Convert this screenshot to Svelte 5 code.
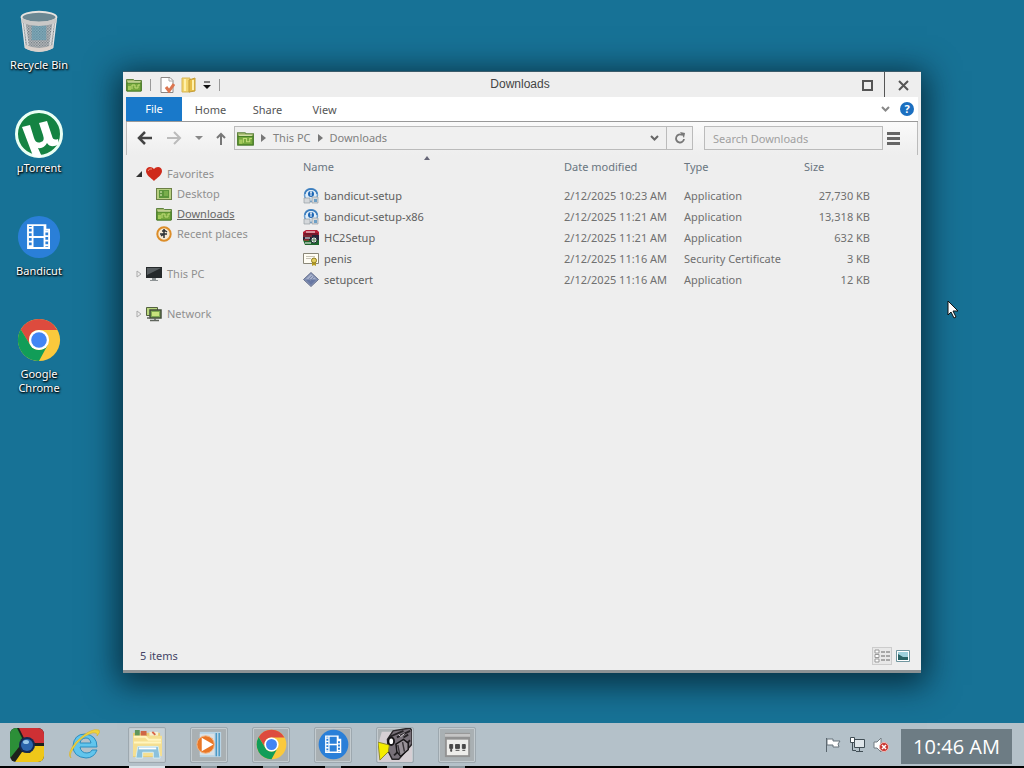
<script lang="ts">
  type FileRow = { icon: string; name: string; date: string; type: string; size: string };

  const shortcuts = [
    { icon: 'bin', label: 'Recycle Bin' },
    { icon: 'utorrent', label: 'µTorrent' },
    { icon: 'bandicut', label: 'Bandicut' },
    { icon: 'chrome', label: 'Google Chrome' },
  ];

  const files: FileRow[] = [
    { icon: 'setup', name: 'bandicut-setup', date: '2/12/2025 10:23 AM', type: 'Application', size: '27,730 KB' },
    { icon: 'setup', name: 'bandicut-setup-x86', date: '2/12/2025 11:21 AM', type: 'Application', size: '13,318 KB' },
    { icon: 'archive', name: 'HC2Setup', date: '2/12/2025 11:21 AM', type: 'Application', size: '632 KB' },
    { icon: 'cert', name: 'penis', date: '2/12/2025 11:16 AM', type: 'Security Certificate', size: '3 KB' },
    { icon: 'diamond', name: 'setupcert', date: '2/12/2025 11:16 AM', type: 'Application', size: '12 KB' },
  ];

  const favorites = [
    { icon: 'desktop', label: 'Desktop' },
    { icon: 'folder', label: 'Downloads' },
    { icon: 'recent', label: 'Recent places' },
  ];

  const tasks = [
    { icon: 'explorer', label: 'File Explorer', active: true },
    { icon: 'player', label: 'Media Player', active: false },
    { icon: 'chrome', label: 'Google Chrome', active: false },
    { icon: 'bandicut', label: 'Bandicut', active: false },
    { icon: 'camera', label: 'Camera', active: false },
    { icon: 'panel', label: 'Control panel', active: false },
  ];

  let current = $state('Downloads');
  let search = $state('');
</script>

{#snippet icon(name: string, size: number)}
  {#if name === 'bin'}
    <svg width={size} height={size} viewBox="0 0 48 48" aria-hidden="true">
      <defs>
        <pattern id="mesh" width="3" height="3" patternUnits="userSpaceOnUse">
          <rect width="3" height="3" fill="#c3c5c7" /><rect width="1.500" height="1.500" fill="#6a757c" /><rect x="1.500" y="1.500" width="1.500" height="1.500" fill="#7f888e" />
        </pattern>
      </defs>
      <path d="M5 9L9 42Q24 50 39 42L43 9Z" fill="url(#mesh)" stroke="#e4e4e4" stroke-width="1.500" />
      <path d="M16 18h16v16H16z" fill="#4d9ab5" opacity=".5" />
      <path d="M8 13L12 40M40 13L36 40" stroke="#eee" stroke-width="2" opacity=".7" />
      <path d="M9 39Q24 46 39 39V43Q24 51 9 43Z" fill="#d9d0ca" />
      <ellipse cx="24" cy="9" rx="19" ry="6" fill="#6c8792" stroke="#e7e3e0" stroke-width="2" />
      <path d="M5 10v5q19 7 38 0v-5q-19 8-38 0z" fill="#c9c8c7" />
    </svg>
  {:else if name === 'utorrent'}
    <svg width={size} height={size} viewBox="0 0 48 48" aria-hidden="true">
      <circle cx="24" cy="24" r="22.500" fill="#148342" stroke="#eafff4" stroke-width="3" />
      <path d="M7 17l8-2 4 13q2 6 7 4 4-1 2-7l-4-12 8-2 5 15q1 5 6 3l1 5q-8 5-12-1-3 6-9 5l4 9q-5 1-9-1z" fill="#fff" />
    </svg>
  {:else if name === 'bandicut'}
    <svg width={size} height={size} viewBox="0 0 48 48" aria-hidden="true">
      <circle cx="24" cy="24" r="23" fill="#2a7fd8" />
      <path d="M12 11h19v5h4v20H12zM17 11v25M30 11v25M17 24h13" fill="none" stroke="#fff" stroke-width="2" />
      <path d="M14.500 13v23M32.500 17v19" stroke="#fff" stroke-width="4" stroke-dasharray="2 3" />
    </svg>
  {:else if name === 'chrome'}
    <svg width={size} height={size} viewBox="0 0 48 48" aria-hidden="true">
      <circle cx="24" cy="24" r="23" fill="#fac93c" />
      <path d="M24 1A23 23 0 0 1 44 13H24A11 11 0 0 0 14.500 29.500L4.100 12.500A23 23 0 0 1 24 1z" fill="#dd4b3e" />
      <path d="M4.100 12.500L14.500 29.500A11 11 0 0 0 33.500 29.500L24 47A23 23 0 0 1 4.100 12.500z" fill="#119d58" />
      <circle cx="24" cy="24" r="11" fill="#fff" /><circle cx="24" cy="24" r="8.500" fill="#4285f4" />
    </svg>
  {:else if name === 'folder'}
    <svg width={size} height={size} viewBox="0 0 16 16" aria-hidden="true">
      <path d="M.500 4V2.500h7l1 1h7V14H.500z" fill="#a4b96c" stroke="#5f8440" />
      <path d="M1 6h14v8H1z" fill="#77a93e" stroke="#497f28" />
      <path d="M2 9h3v4H2z" fill="#a5cb5c" /><path d="M6 12V8h3v3h3V8h2" fill="none" stroke="#c2dc79" />
      <path d="M2 5h12" stroke="#dfe9b6" />
    </svg>
  {:else if name === 'desktop'}
    <svg width={size} height={size} viewBox="0 0 16 16" aria-hidden="true">
      <path d="M0 2h16v12H0z" fill="#6b7f45" /><path d="M1 3h14v10H1z" fill="#b7cf82" />
      <path d="M3 4h10v8H3z" fill="#5b943b" /><path d="M4 6h2M4 9h2" stroke="#edf5c9" /><path d="M8 5h4v5H8z" fill="#79ad4b" />
    </svg>
  {:else if name === 'recent'}
    <svg width={size} height={size} viewBox="0 0 16 16" aria-hidden="true">
      <circle cx="8" cy="8" r="6.700" fill="#f7ead4" stroke="#dc8d29" stroke-width="2" />
      <path d="M8 3v9M4 8h7M8 4l3 2M5 10l3-2M6 5h3" stroke="#2e3337" stroke-width="1.500" fill="none" />
    </svg>
  {:else if name === 'heart'}
    <svg width={size} height={size} viewBox="0 0 16 16" aria-hidden="true">
      <path d="M8 15C5 12 0 9 0 5 0 0 6 0 8 3c2-3 8-3 8 2 0 4-5 7-8 10z" fill="#cf2a1b" /><path d="M2 5q1-3 4-2" stroke="#f0907a" fill="none" />
    </svg>
  {:else if name === 'monitor'}
    <svg width={size} height={size} viewBox="0 0 16 16" aria-hidden="true">
      <path d="M0 1h16v11H0z" fill="#25292b" /><path d="M1 2h14L1 9z" fill="#575d60" /><path d="M6 12h4v2h2v1H4v-1h2z" fill="#8e9395" />
    </svg>
  {:else if name === 'network'}
    <svg width={size} height={size} viewBox="0 0 16 16" aria-hidden="true">
      <path d="M.500 1.500h11v8H.500z" fill="#b9d67c" stroke="#53613f" /><path d="M4 4h11v8H4z" fill="#80a952" stroke="#434e3b" stroke-width="1.500" />
      <path d="M6 6h7v4H6z" fill="#c9e27d" /><path d="M1 12h3M4 14.500h9M9 12v2" stroke="#60665e" stroke-width="1.500" />
    </svg>
  {:else if name === 'setup'}
    <svg width={size} height={size} viewBox="0 0 16 16" aria-hidden="true">
      <circle cx="8" cy="7" r="6.500" fill="#e0edf8" stroke="#6b9fd0" stroke-width="1.500" />
      <path d="M2 6q0-4 6-5 6 1 6 5" stroke="#3c7dbd" stroke-width="1.500" fill="none" />
      <circle cx="8" cy="6" r="3" fill="#1d67b5" /><path d="M8 4v4M7 4h2" stroke="#fff" />
      <path d="M1 10h6v5H1zM9 9h6v6H9z" fill="#d5d8db" stroke="#969da3" stroke-width=".7" /><path d="M11 11h3v3h-3z" fill="#6c9fc6" />
    </svg>
  {:else if name === 'archive'}
    <svg width={size} height={size} viewBox="0 0 16 16" aria-hidden="true">
      <path d="M0 2L3 0h11l2 2v3H0z" fill="#b42037" /><path d="M0 5h16v5H0z" fill="#252438" /><path d="M0 10h16v5H2z" fill="#1e652d" />
      <path d="M3 2h9M2 8h5M2 13h6" stroke="#fff" /><path d="M1 4h14" stroke="#3a1020" /><path d="M0 6h9M1 10h5" stroke="#d52d31" />
      <circle cx="11" cy="10" r="3" fill="#eee" stroke="#25323b" /><path d="M11 8v4M9 10h4" stroke="#5d8b61" />
    </svg>
  {:else if name === 'cert'}
    <svg width={size} height={size} viewBox="0 0 16 16" aria-hidden="true">
      <path d="M.500 2.500h15v10H.500z" fill="#fffdf4" stroke="#8a8778" /><path d="M3 5.500h9M3 7.500h5" stroke="#c6c3b6" />
      <path d="M9 10v5l2-1 2 1v-5" fill="#b49c23" /><circle cx="11" cy="9.500" r="2.500" fill="#e3ce60" stroke="#8d7a21" />
    </svg>
  {:else if name === 'diamond'}
    <svg width={size} height={size} viewBox="0 0 16 16" aria-hidden="true">
      <path d="M8 .500L15.500 7.500 8 14.500.500 7.500z" fill="#8290b3" stroke="#6a7390" /><path d="M8 2l5 5H3z" fill="#a7b1cc" /><path d="M3 8l5 5 5-5z" fill="#6878a3" /><path d="M6 7l3-3M7 9l4-4" stroke="#7b88ab" />
    </svg>
  {:else if name === 'explorer'}
    <svg width={size} height={size} viewBox="0 0 32 32" aria-hidden="true">
      <path d="M1 4h28v25H1z" fill="#e9ce76" /><path d="M3 1h5v6H3z" fill="#5d965c" /><path d="M9 2h6v6H9z" fill="#cf6646" /><path d="M18 3h9v4h-9z" fill="#f6efd2" /><path d="M21 3l3 3" stroke="#d96448" stroke-width="2" />
      <path d="M1 7h30v21H1z" fill="#f5df91" /><path d="M2 8h12l3 3h13M2 14h28" stroke="#fff5bf" stroke-width="2" fill="none" />
      <path d="M4 30l2-12h21l2 12h-7v-6H11v6z" fill="#8bc1dc" stroke="#d6edf3" /><path d="M7 20h18" stroke="#fff" stroke-width="2" />
    </svg>
  {:else if name === 'player'}
    <svg width={size} height={size} viewBox="0 0 32 32" aria-hidden="true">
      <path d="M6 3h22v26H6z" fill="#b9d4e5" /><path d="M6 5h15v22H6z" fill="#d8e1e6" /><path d="M23 4v24M26 4v24" stroke="#4a99c5" stroke-width="1.500" />
      <circle cx="12" cy="16" r="9" fill="#e97727" stroke="#f6b580" /><path d="M8 9l12 7-12 7z" fill="#fff" />
    </svg>
  {:else if name === 'camera'}
    <svg width={size} height={size} viewBox="0 0 36 36" aria-hidden="true">
      <path d="M4 4h32v32H0V18z" fill="#d6cfd4" />
      <path d="M10 12L16 3 34 0l2 3v14L22 33h-7l-4-8z" fill="#777078" stroke="#2a272a" stroke-width="1.500" />
      <path d="M13 9L27 3M20 10L34 3M17 29l17-16M27 10l5-3" stroke="#252225" stroke-width="2" /><path d="M19 17l8-5 5 4v7l-8 7-4-5z" fill="#989198" stroke="#171517" stroke-width="1.500" />
      <path d="M21 18l2 10M26 15l2 10" stroke="#383438" stroke-width="1.500" />
      <path d="M0 15l12 3-1 7-9 9z" fill="#f4ed00" stroke="#8a8727" /><ellipse cx="14" cy="14" rx="3" ry="4" fill="#fff" stroke="#171517" stroke-width="2" />
      <path d="M22 7l2 2 4-3" stroke="#f2edf2" fill="none" />
    </svg>
  {:else if name === 'panel'}
    <svg width={size} height={size} viewBox="0 0 32 32" aria-hidden="true">
      <path d="M3 4h26v25H3z" fill="#929292" /><path d="M3 5h26v3H3z" fill="#c5c5c5" /><path d="M5 11h22v16H5z" fill="#ededea" />
      <path d="M8 16h3v4H8zM14 16h4v4h-4zM21 16h3v4h-3zM9 21h1v2H9zM14 22h4M21 22h3" fill="#474747" stroke="#474747" />
    </svg>
  {/if}
{/snippet}

<div class="screen">
  <main class="desktop">
    <nav class="shortcuts" aria-label="Desktop">
      {#each shortcuts as s (s.label)}
        <button class="shortcut" type="button">
          {@render icon(s.icon, s.icon === 'utorrent' ? 48 : 44)}
          <span>{s.label}</span>
        </button>
      {/each}
    </nav>

    <section class="window" aria-label="Downloads">
      <header class="titlebar">
        <div class="quick">
          {@render icon('folder', 16)}
          <span class="sep"></span>
          <button type="button" aria-label="Properties">
            <svg width="16" height="16" viewBox="0 0 16 16"><path d="M2 .5h9l3 3v12H2z" fill="#fff" stroke="#8c8785" /><path d="M10 1v3h4" fill="none" stroke="#aaa" /><path d="M7 10l3 4 5-7" stroke="#dc7650" stroke-width="3" fill="none" /></svg>
          </button>
          <button type="button" aria-label="New folder">
            <svg width="16" height="16" viewBox="0 0 16 16"><path d="M1 1h8v14H1z" fill="#f4d66d" stroke="#d8b557" /><path d="M8 3l6-2v13l-6 1z" fill="#e6bd45" stroke="#c39d3a" /><path d="M4 2v12M12 3v10" stroke="#fff0aa" stroke-width="2" /></svg>
          </button>
          <button type="button" aria-label="Customize toolbar">
            <svg width="8" height="8" viewBox="0 0 8 8"><path d="M1 1h6" stroke="#111" /><path d="M0 4h8L4 8z" fill="#111" /></svg>
          </button>
          <span class="sep"></span>
        </div>
        <h1>Downloads</h1>
        <div class="controls">
          <button type="button" aria-label="Maximize"><svg width="11" height="11" viewBox="0 0 11 11"><path d="M1 1h9v9H1z" fill="none" stroke="#555" stroke-width="2" /></svg></button>
          <button class="close" type="button" aria-label="Close"><svg width="11" height="11" viewBox="0 0 11 11"><path d="M1 1l9 9M10 1l-9 9" stroke="#555" stroke-width="2" /></svg></button>
        </div>
      </header>

      <div class="ribbon">
        <button class="file" type="button">File</button>
        <button type="button">Home</button>
        <button type="button">Share</button>
        <button type="button">View</button>
        <div class="ribbon-end">
          <button type="button" aria-label="Expand the ribbon"><svg width="9" height="6" viewBox="0 0 9 6"><path d="M1 1l3.500 3.500L8 1" fill="none" stroke="#888" stroke-width="2" /></svg></button>
          <button class="help" type="button" aria-label="Help">?</button>
        </div>
      </div>

      <div class="navbar">
        <div class="arrows">
          <button type="button" aria-label="Back"><svg width="16" height="14" viewBox="0 0 16 14"><path d="M15 7H2M8 1L2 7l6 6" fill="none" stroke="#444" stroke-width="2.500" /></svg></button>
          <button type="button" aria-label="Forward"><svg width="16" height="14" viewBox="0 0 16 14"><path d="M1 7h13M8 1l6 6-6 6" fill="none" stroke="#bbb" stroke-width="2" /></svg></button>
          <button type="button" aria-label="Recent locations"><svg width="8" height="4" viewBox="0 0 8 4"><path d="M0 0h8L4 4z" fill="#888" /></svg></button>
          <button type="button" aria-label="Up"><svg width="10" height="13" viewBox="0 0 10 13"><path d="M5 13V2M1 6l4-4 4 4" fill="none" stroke="#777" stroke-width="2" /></svg></button>
        </div>
        <div class="address">
          {@render icon('folder', 17)}
          <svg width="5" height="8" viewBox="0 0 5 8"><path d="M0 0l5 4-5 4z" fill="#777" /></svg>
          <a href="#this-pc">This PC</a>
          <svg width="5" height="8" viewBox="0 0 5 8"><path d="M0 0l5 4-5 4z" fill="#777" /></svg>
          <a href="#downloads">Downloads</a>
          <button class="drop" type="button" aria-label="Previous locations"><svg width="9" height="6" viewBox="0 0 9 6"><path d="M1 1l3.500 3.500L8 1" fill="none" stroke="#666" stroke-width="2" /></svg></button>
          <button class="refresh" type="button" aria-label="Refresh"><svg width="12" height="12" viewBox="0 0 12 12"><path d="M8 3A4 4 0 1 0 10 7" fill="none" stroke="#777" stroke-width="1.800" /><path d="M6 0l5 1-1 5z" fill="#777" /></svg></button>
        </div>
        <input type="text" placeholder="Search Downloads" aria-label="Search Downloads" bind:value={search} />
        <button class="menu" type="button" aria-label="Menu"><svg width="13" height="13" viewBox="0 0 13 13"><path d="M0 1.500h13M0 6.500h13M0 11.500h13" stroke="#666" stroke-width="3" /></svg></button>
      </div>

      <div class="content">
        <aside class="tree">
          <div class="branch">
            <svg width="6" height="6" viewBox="0 0 6 6"><path d="M6 0v6H0z" fill="#333" /></svg>
            {@render icon('heart', 16)}
            <a href="#favorites">Favorites</a>
          </div>
          <ul>
            {#each favorites as f (f.label)}
              <li>
                {@render icon(f.icon, 16)}
                <a href="#{f.label}" class:current={current === f.label} onclick={() => (current = f.label)}>{f.label}</a>
              </li>
            {/each}
          </ul>
          <div class="branch">
            <svg width="6" height="8" viewBox="0 0 6 8"><path d="M1 1l4 3-4 3z" fill="none" stroke="#aaa" /></svg>
            {@render icon('monitor', 16)}
            <a href="#this-pc">This PC</a>
          </div>
          <div class="branch">
            <svg width="6" height="8" viewBox="0 0 6 8"><path d="M1 1l4 3-4 3z" fill="none" stroke="#aaa" /></svg>
            {@render icon('network', 16)}
            <a href="#network">Network</a>
          </div>
        </aside>

        <div class="list">
          <table>
            <thead>
              <tr>
                <th class="name">Name <svg class="sort" width="6" height="4" viewBox="0 0 6 4"><path d="M0 4l3-4 3 4z" fill="#667" /></svg></th>
                <th class="date">Date modified</th>
                <th class="type">Type</th>
                <th class="size">Size</th>
              </tr>
            </thead>
            <tbody>
              {#each files as f (f.name)}
                <tr>
                  <td class="name"><span class="cell">{@render icon(f.icon, 16)}{f.name}</span></td>
                  <td>{f.date}</td>
                  <td>{f.type}</td>
                  <td class="size">{f.size}</td>
                </tr>
              {/each}
            </tbody>
          </table>
        </div>
      </div>

      <footer class="status">
        <span>{files.length} items</span>
        <div class="views">
          <button class="on" type="button" aria-label="Details view"><svg width="16" height="14" viewBox="0 0 16 14"><path d="M1 1h4v3H1zM1 5.500h4v3H1zM1 10h4v3H1z" fill="#fff" stroke="#999" /><path d="M7 3h4M12 3h4M7 7h4M12 7h4M7 11h4M12 11h4" stroke="#666" /></svg></button>
          <button type="button" aria-label="Icon view"><svg width="14" height="12" viewBox="0 0 14 12"><path d="M.5.5h13v11H.5z" fill="#fff" stroke="#71969f" /><path d="M2 2h10v8H2z" fill="#9ed1dc" /><path d="M2 4l5 3h5v3H2z" fill="#286365" /></svg></button>
        </div>
      </footer>
    </section>

    <svg class="pointer" width="12" height="19" viewBox="0 0 12 19"><path d="M1 1v14l3-3 3 6 2-1-3-6h5z" fill="#fff" stroke="#111" /></svg>
  </main>

  <footer class="taskbar">
    <div class="pinned">
      <button type="button" aria-label="Start">
        <svg width="34" height="34" viewBox="0 0 34 34"><defs><clipPath id="start-shape"><rect width="34" height="34" rx="6" /></clipPath></defs><g clip-path="url(#start-shape)"><path d="M0 0h34v34H0z" fill="#1d221c" /><path d="M0 0h7l5 10-3 9-8 10H0z" fill="#2c8f38" /><path d="M9 0h25v15H23L17 10h-3z" fill="#ce3034" /><path d="M24 18h10v16H5l7-10 8 1z" fill="#efc719" /></g><circle cx="17" cy="17" r="8" fill="#142852" /><circle cx="17" cy="17" r="6" fill="#2c65ab" /><ellipse cx="16" cy="14" rx="3" ry="2" fill="#98c7e9" /></svg>
      </button>
      <button type="button" aria-label="Internet Explorer">
        <svg width="34" height="34" viewBox="0 0 34 34"><path d="M29 19H12q1 6 7 6 4 0 5-3h5q-3 8-11 8Q5 29 5 18 6 6 17 6q12 1 12 13zM12 15h11q-1-5-5-5-5 0-6 5z" fill="#61c5ed" stroke="#2c8dbf" /><path d="M3 30Q-2 26 8 14 23-1 31 2q2 2-2 6 1-4-5-3Q12 9 5 21q-4 6-2 9z" fill="#f0d33b" stroke="#d3ae31" stroke-width=".6" /></svg>
      </button>
    </div>
    <div class="tasks">
      {#each tasks as t (t.label)}
        <button class="task" class:active={t.active} type="button" aria-label={t.label}>{@render icon(t.icon, t.icon === 'camera' ? 34 : 31)}</button>
      {/each}
    </div>
    <div class="tray">
      <svg width="17" height="16" viewBox="0 0 17 16"><path d="M1.500 1v14" stroke="#59656d" /><path d="M2 2h6v2h7l-2 3 1 3H8V8H2z" fill="#fff" stroke="#66727a" /></svg>
      <svg width="17" height="16" viewBox="0 0 17 16"><path d="M5.500 2.500h10v8h-10z" fill="#dfe6ea" stroke="#414e55" /><path d="M1.500.500h4v5h-4z" fill="#fff" stroke="#414e55" /><path d="M3.500 6v7.500H7M10.500 11v3M7 14.500h7" fill="none" stroke="#414e55" /></svg>
      <svg width="17" height="16" viewBox="0 0 17 16"><path d="M1 5h3l4-4v14l-4-4H1z" fill="#fff" stroke="#727c82" /><circle cx="11" cy="10" r="4.500" fill="#c8352f" stroke="#efbab6" /><path d="M9 8l4 4M13 8l-4 4" stroke="#fff" stroke-width="1.500" /></svg>
    </div>
    <button class="clock" type="button">10:46 AM</button>
  </footer>
</div>

<style>
  :global(body) { margin: 0; }
  .screen { display: flex; flex-direction: column; height: 100vh; overflow: hidden; background: #177296; font: 11px/16px "Noto Sans", "Open Sans", sans-serif; color: #707070; }
  button { padding: 0; border: 0; background: none; font: inherit; color: inherit; display: flex; align-items: center; justify-content: center; }
  svg { display: block; flex: none; }
  a { color: inherit; text-decoration: none; }

  .desktop { position: relative; flex: 1; min-height: 0; }
  .shortcuts { display: flex; flex-direction: column; width: 78px; padding-top: 7px; }
  .shortcut { flex-direction: column; justify-content: flex-start; gap: 3px; height: 103px; color: #fff; line-height: 14px; text-shadow: 1px 1px 2px #000, 0 1px 2px #000; }
  .shortcut span { width: 64px; }
  .shortcut svg { height: 48px; }

  .window { position: absolute; inset: 71px 103px 50px 123px; display: flex; flex-direction: column; box-sizing: border-box; border-top: 1px solid #3b5c6b; border-bottom: 3px solid #8d9294; background: #eee; box-shadow: 0 6px 30px 6px rgba(0, 20, 30, 0.7); }
  .titlebar { display: grid; grid-template-columns: 1fr auto 1fr; align-items: center; height: 25px; }
  .titlebar h1 { margin: 0 4px 2px 0; font: 12px/22px "Liberation Sans", Arial, sans-serif; color: #444; }
  .quick { display: flex; align-items: center; gap: 6px; padding-left: 3px; }
  .sep { width: 1px; height: 12px; margin: 0 2px; background: #999; }
  .controls { display: flex; justify-content: flex-end; align-self: stretch; }
  .controls button { width: 34px; padding-top: 2px; }
  .controls .close { width: 37px; border-left: 1px solid #555; }

  .ribbon { display: flex; height: 24px; margin: 0 3px; border-bottom: 1px solid #999; background: #fff; color: #555; }
  .ribbon button { width: 57px; padding-top: 1px; }
  .ribbon .file { width: 56px; padding: 0; background: #1979ca; color: #fff; }
  .ribbon-end { display: flex; align-items: center; gap: 10px; margin-left: auto; padding-right: 4px; }
  .ribbon-end button { width: auto; padding: 0; }
  .ribbon-end .help { width: 14px; height: 14px; border-radius: 50%; background: #1b6fc0; color: #fff; font-weight: bold; }

  .navbar { display: flex; align-items: center; height: 33px; margin: 0 3px; padding: 0 17px 1px 10px; box-sizing: border-box; border: solid #bbb; border-width: 0 1px; background: linear-gradient(#fafafa, #eee); }
  .arrows { display: flex; align-items: center; gap: 13px; width: 97px; }
  .address { flex: 1; display: flex; align-items: center; gap: 7px; height: 22px; padding-left: 2px; border: 1px solid #bbb; background: #f0f0f0; color: #808080; }
  .drop { margin-left: auto; }
  .refresh { width: 26px; box-sizing: border-box; align-self: stretch; border-left: 1px solid #bbb; }
  input { width: 179px; height: 24px; box-sizing: border-box; margin-left: 11px; padding: 0 8px; border: 1px solid #bbb; border-radius: 0; background: #f0f0f0; font: inherit; color: #666; }
  input::placeholder { color: #a0a0a0; opacity: 1; }
  .menu { margin-left: 4px; }

  .content { flex: 1; display: flex; min-height: 0; }
  .tree { width: 180px; box-sizing: border-box; padding: 9px 0 0 13px; color: #909090; }
  .branch { display: flex; align-items: center; gap: 5px; height: 20px; margin-bottom: 20px; }
  .branch svg:first-child { margin-right: -1px; }
  .tree ul { margin: -20px 0 20px; padding: 0 0 0 20px; list-style: none; }
  .tree li { display: flex; align-items: center; gap: 5px; height: 20px; }
  .current { color: #666; text-decoration: underline; }

  .list { flex: 1; min-width: 0; }
  table { border-collapse: collapse; table-layout: fixed; width: 567px; }
  th, td { padding: 0; height: 21px; font-weight: normal; text-align: left; white-space: nowrap; }
  th { height: 24px; padding-bottom: 6px; color: #697580; }
  th.name { position: relative; width: 261px; }
  .sort { position: absolute; top: 1px; left: 121px; }
  th.date, th.type { width: 120px; }
  td.name { color: #606060; }
  td.size { text-align: right; }
  .cell { display: flex; align-items: center; gap: 5px; }

  .status { display: flex; align-items: center; justify-content: space-between; height: 29px; padding: 0 11px 0 17px; color: #446; }
  .views { display: flex; gap: 4px; }
  .views .on { width: 20px; height: 18px; border: 1px solid #ccc; background: #e8e8e8; }

  .pointer { position: absolute; top: 300px; left: 947px; }

  .taskbar { display: flex; align-items: center; height: 43px; border-bottom: 2px solid #000; background: #b4c1c9; }
  .pinned { display: flex; gap: 20px; padding-left: 8px; }
  .pinned button { width: 38px; height: 38px; }
  .tasks { display: flex; gap: 24px; margin-left: 24px; }
  .task { position: relative; width: 38px; height: 36px; box-sizing: border-box; border: 1px solid #9da8af; border-radius: 2px; background: #a9b0b3; box-shadow: inset 0 0 0 1px #c3cbcf; }
  .task::after { content: ""; position: absolute; bottom: -6px; left: 10px; width: 16px; height: 2px; background: #89959b; }
  .task.active { background: #c6d1d7; }
  .task.active::after { left: 0; width: 36px; background: #dce5ea; }
  .tray { display: flex; gap: 7px; margin-left: auto; }
  .clock { width: 111px; height: 35px; margin: 4px 12px 0 11px; background: #6d7c84; color: #fff; font-family: "Open Sans", "Noto Sans", sans-serif; font-size: 20px; }
</style>
